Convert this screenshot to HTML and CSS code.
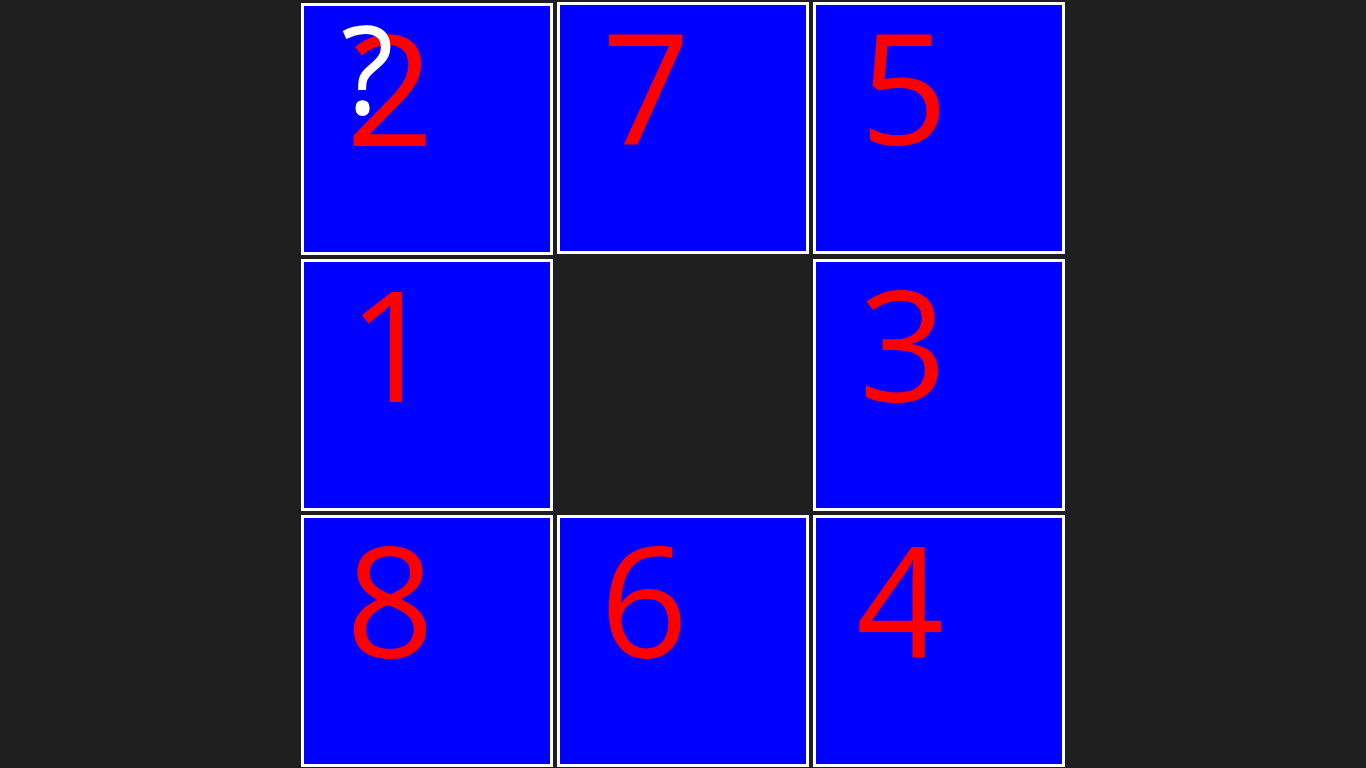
FILE: index.html
```html
<!DOCTYPE html>
<html lang="en">
<head>
<meta charset="utf-8">
<title>Puzzle</title>
<link rel="stylesheet" href="styles.css">
</head>
<body>
<main class="board">
  <div class="tile"><span class="num">2</span><span class="hint">?</span></div>
  <div class="tile up"><span class="num">7</span></div>
  <div class="tile up"><span class="num n5">5</span></div>
  <div class="tile"><span class="num n1">1</span></div>
  <div class="empty"></div>
  <div class="tile"><span class="num n3">3</span></div>
  <div class="tile"><span class="num">8</span></div>
  <div class="tile"><span class="num n6">6</span></div>
  <div class="tile"><span class="num n4">4</span></div>
</main>
</body>
</html>
```
FILE: styles.css
```css
html, body {
  margin: 0;
  padding: 0;
  background: #1f1f1f;
  height: 100%;
  overflow: hidden;
}
.board {
  display: grid;
  grid-template-columns: repeat(3, 252px);
  grid-template-rows: repeat(3, 252px);
  gap: 4px;
  width: 764px;
  margin: 0 auto;
  padding-top: 3px;
}
.tile {
  position: relative;
  box-sizing: border-box;
  background: #0000ff;
  border: 3px solid #ffffff;
}
.tile.up {
  top: -1px;
}
.num {
  display: block;
  font-family: "Open Sans", "Noto Sans", sans-serif;
  font-size: 154px;
  line-height: 1.2;
  margin-top: -12px;
  color: #ff0000;
  padding-left: 42px;
}
.num.n5 { padding-left: 44px; }
.num.n1 { padding-left: 44px; }
.num.n3 { padding-left: 43px; }
.num.n6 { padding-left: 40px; }
.num.n4 { padding-left: 40px; }
.hint {
  position: absolute;
  left: 37px;
  top: -12px;
  font-family: "Open Sans", "Noto Sans", sans-serif;
  font-size: 122px;
  line-height: 1.2;
  color: #ffffff;
}
```
